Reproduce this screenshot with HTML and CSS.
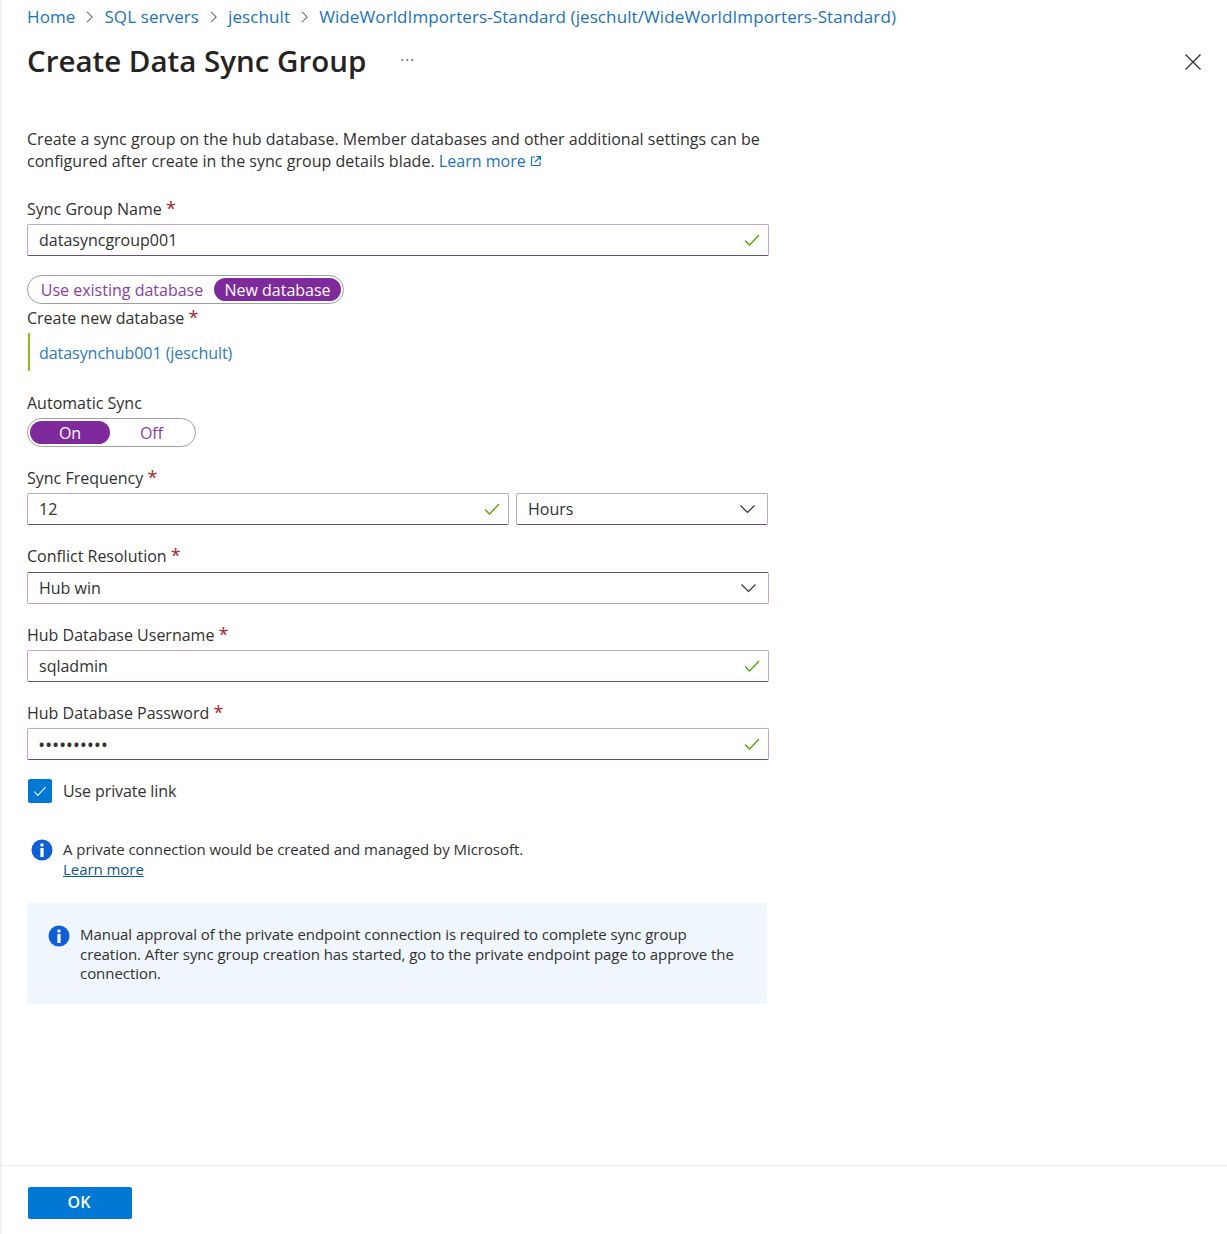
FILE: index.html
```html
<!DOCTYPE html>
<html>
	<head>
		<meta charset="UTF-8">
		<title>Create Data Sync Group</title>
		<link rel="stylesheet" href="styles.css">
	</head>
	<body>
		<div class="blade">
			<div class="content">
				<div class="crumbs">
					<a>Home</a>
					<svg class="crumbSep" viewBox="0 0 10 16"><path d="M2 2l6 6-6 6"/></svg>
					<a>SQL servers</a>
					<svg class="crumbSep" viewBox="0 0 10 16"><path d="M2 2l6 6-6 6"/></svg>
					<a>jeschult</a>
					<svg class="crumbSep" viewBox="0 0 10 16"><path d="M2 2l6 6-6 6"/></svg>
					<a>WideWorldImporters-Standard (jeschult/WideWorldImporters-Standard)</a>
				</div>
				<div class="titleRow">
					<h1>Create Data Sync Group</h1>
					<span class="more">...</span>
					<svg class="close" viewBox="0 0 18 18"><path d="M1.5 1.5l15 15M16.5 1.5l-15 15"/></svg>
				</div>
				<div class="intro">
					<div>Create a sync group on the hub database. Member databases and other additional settings can be</div>
					<div>configured after create in the sync group details blade. <a>Learn more</a>
						<svg class="extLink" viewBox="0 0 12 12"><path d="M5 2H1.500v8.500H10V7M6.500 1.500h4v4M10.500 1.500L5 7"/></svg>
					</div>
				</div>

				<div class="label first">Sync Group Name <span class="req">*</span></div>
				<div class="field">
					<span>datasyncgroup001</span>
					<svg class="check" viewBox="0 0 16 12"><path d="M1 6.500l4.500 4.500L15 1"/></svg>
				</div>

				<div class="toggle dbToggle">
					<span class="opt optExisting">Use existing database</span>
					<span class="opt on optNew">New database</span>
				</div>
				<div class="label tight">Create new database <span class="req">*</span></div>
				<div class="hubLink"><a>datasynchub001 (jeschult)</a></div>

				<div class="label syncLabel">Automatic Sync</div>
				<div class="toggle syncToggle">
					<span class="opt on optOn">On</span>
					<span class="opt optOff">Off</span>
				</div>

				<div class="label">Sync Frequency <span class="req">*</span></div>
				<div class="freqRow">
					<div class="field freqValue">
						<span>12</span>
						<svg class="check" viewBox="0 0 16 12"><path d="M1 6.500l4.500 4.500L15 1"/></svg>
					</div>
					<div class="field freqUnit">
						<span>Hours</span>
						<svg class="chevron" viewBox="0 0 16 10"><path d="M1 1.500l7 7 7-7"/></svg>
					</div>
				</div>

				<div class="label conflictLabel">Conflict Resolution <span class="req">*</span></div>
				<div class="field topDark">
					<span>Hub win</span>
					<svg class="chevron" viewBox="0 0 16 10"><path d="M1 1.500l7 7 7-7"/></svg>
				</div>

				<div class="label">Hub Database Username <span class="req">*</span></div>
				<div class="field">
					<span>sqladmin</span>
					<svg class="check" viewBox="0 0 16 12"><path d="M1 6.500l4.500 4.500L15 1"/></svg>
				</div>

				<div class="label">Hub Database Password <span class="req">*</span></div>
				<div class="field">
					<span class="dots">••••••••••</span>
					<svg class="check" viewBox="0 0 16 12"><path d="M1 6.500l4.500 4.500L15 1"/></svg>
				</div>

				<div class="checkRow">
					<div class="checkbox"><svg viewBox="0 0 16 12"><path d="M1.500 6l4 4.500L14.500 1"/></svg></div>
					<span>Use private link</span>
				</div>

				<div class="note">
					<svg class="infoIcon" viewBox="0 0 22 22"><circle cx="11" cy="11" r="10.500"/><circle class="infoMark" cx="11" cy="6" r="1.700"/><rect class="infoMark" x="9.400" y="9" width="3.200" height="9"/></svg>
					<div class="noteText">
						<div>A private connection would be created and managed by Microsoft.</div>
						<a>Learn more</a>
					</div>
				</div>

				<div class="infoBox">
					<svg class="infoIcon" viewBox="0 0 22 22"><circle cx="11" cy="11" r="10.500"/><circle class="infoMark" cx="11" cy="6" r="1.700"/><rect class="infoMark" x="9.400" y="9" width="3.200" height="9"/></svg>
					<div>Manual approval of the private endpoint connection is required to complete sync group creation. After sync group creation has started, go to the private endpoint page to approve the connection.</div>
				</div>
			</div>
			<div class="footer">
				<button class="okButton">OK</button>
			</div>
		</div>
	</body>
</html>
```

FILE: styles.css
```css
html, body{
	margin: 0;
	height: 100%;
	background: #fff;
}
body{
	font-family: "Open Sans", "Noto Sans", sans-serif;
	font-size: 16px;
	color: #323130;
}
a{
	color: #1a73b8;
}
.blade{
	height: 1234px;
	box-sizing: border-box;
	border-left: 2px solid #f0f0f0;
	display: flex;
	flex-direction: column;
	overflow: hidden;
}
.content{
	flex: 1;
	padding: 0 0 0 25px;
}

.crumbs{
	height: 33px;
	display: flex;
	align-items: center;
	font-size: 17px;
	letter-spacing: 0.1px;
	white-space: nowrap;
}
.crumbSep{
	width: 9px;
	height: 14px;
	margin: 0 10px;
	fill: none;
	stroke: #605e5c;
	stroke-width: 1.200;
}
.titleRow{
	height: 54px;
	display: flex;
	align-items: center;
	position: relative;
}
h1{
	margin: 0;
	font-size: 29.500px;
	font-weight: 600;
	color: #252423;
}
.more{
	margin: -10px 0 0 34px;
	font-size: 15px;
	letter-spacing: 1px;
	color: #605e5c;
}
.close{
	position: absolute;
	right: 25px;
	top: 20px;
	width: 18px;
	height: 18px;
	fill: none;
	stroke: #323130;
	stroke-width: 1.300;
}
.intro{
	margin: 41px 0 0;
	line-height: 22px;
	font-size: 16px;
	letter-spacing: 0.02px;
}
.extLink{
	width: 12px;
	height: 12px;
	fill: none;
	stroke: #1a73b8;
	stroke-width: 1.200;
}

.label{
	height: 20px;
	line-height: 20px;
	margin: 21px 0 5px;
}
.label.first{
	margin-top: 27px;
}
.label.tight{
	margin: 4px 0 5px;
}
.label.syncLabel{
	margin: 22px 0 5px;
}
.label.conflictLabel{
	margin-bottom: 6px;
}
.req{
	color: #a4262c;
	font-size: 18px;
	line-height: 0;
}
.field{
	width: 742px;
	height: 32px;
	box-sizing: border-box;
	display: flex;
	align-items: center;
	justify-content: space-between;
	padding: 0 8px 0 11px;
	border: 1px solid #c5a3d2;
	border-bottom-color: #6d4a7e;
	border-radius: 2px;
}
.field.topDark{
	border-color: #c5a3d2;
	border-top-color: #6d4a7e;
}
.dots{
	font-size: 14px;
	letter-spacing: 1.700px;
	font-weight: 700;
}
.check{
	width: 16px;
	height: 12px;
	fill: none;
	stroke: #57a300;
	stroke-width: 1.300;
}
.chevron{
	width: 17px;
	height: 10px;
	margin-right: 3px;
	fill: none;
	stroke: #323130;
	stroke-width: 1.200;
}
.freqRow{
	display: flex;
	gap: 7px;
}
.freqValue{
	width: 482px;
}
.freqUnit{
	width: 252px;
}

.toggle{
	display: flex;
	align-items: center;
	box-sizing: border-box;
	height: 29px;
	border: 1px solid #a19f9d;
	border-radius: 15px;
	padding: 0 2px;
	color: #8a3ea5;
}
.dbToggle{
	width: 317px;
	margin-top: 19px;
}
.syncToggle{
	width: 169px;
}
.opt{
	height: 23px;
	line-height: 24px;
	border-radius: 12px;
	text-align: center;
}
.opt.on{
	background: #7f2a9c;
	color: #fff;
}
.optExisting{
	width: 184px;
}
.optNew{
	width: 127px;
}
.optOn{
	width: 81px;
}
.optOff{
	width: 84px;
}
.hubLink{
	height: 38px;
	line-height: 38px;
	box-sizing: border-box;
	margin-left: 1px;
	padding: 1px 0 0 9px;
	border-left: 2px solid #8cbd18;
	letter-spacing: -0.05px;
}
.hubLink a{
	color: #2b7cb8;
}

.checkRow{
	display: flex;
	align-items: center;
	gap: 11px;
	margin: 19px 0 0 1px;
	letter-spacing: -0.1px;
}
.checkbox{
	width: 24px;
	height: 24px;
	border-radius: 2px;
	background: #0078d4;
	display: flex;
	align-items: center;
	justify-content: center;
}
.checkbox svg{
	width: 14px;
	height: 11px;
	fill: none;
	stroke: #fff;
	stroke-width: 1.200;
}
.infoIcon{
	width: 22px;
	height: 22px;
	flex: none;
	fill: #0f5fd7;
}
.infoMark{
	fill: #fff;
}
.note{
	display: flex;
	gap: 10px;
	margin: 36px 0 0 4px;
	line-height: 20px;
	font-size: 15px;
	letter-spacing: -0.05px;
}
.noteText a{
	color: #0b5a8f;
	text-decoration: underline;
}
.infoBox{
	display: flex;
	gap: 10px;
	width: 740px;
	height: 101px;
	box-sizing: border-box;
	margin-top: 24px;
	padding: 22px 20px 0 21px;
	background: #eff6fc;
	line-height: 19.500px;
	font-size: 15px;
	letter-spacing: -0.05px;
}

.footer{
	height: 69px;
	box-sizing: border-box;
	border-top: 1px solid #ebebeb;
	padding: 21px 0 0 26px;
}
.okButton{
	display: block;
	width: 104px;
	height: 32px;
	padding: 0 2px 2px 0;
	border: 0;
	border-radius: 2px;
	background: #0078d4;
	color: #fff;
	font-family: inherit;
	font-size: 16px;
	font-weight: 600;
}
```
